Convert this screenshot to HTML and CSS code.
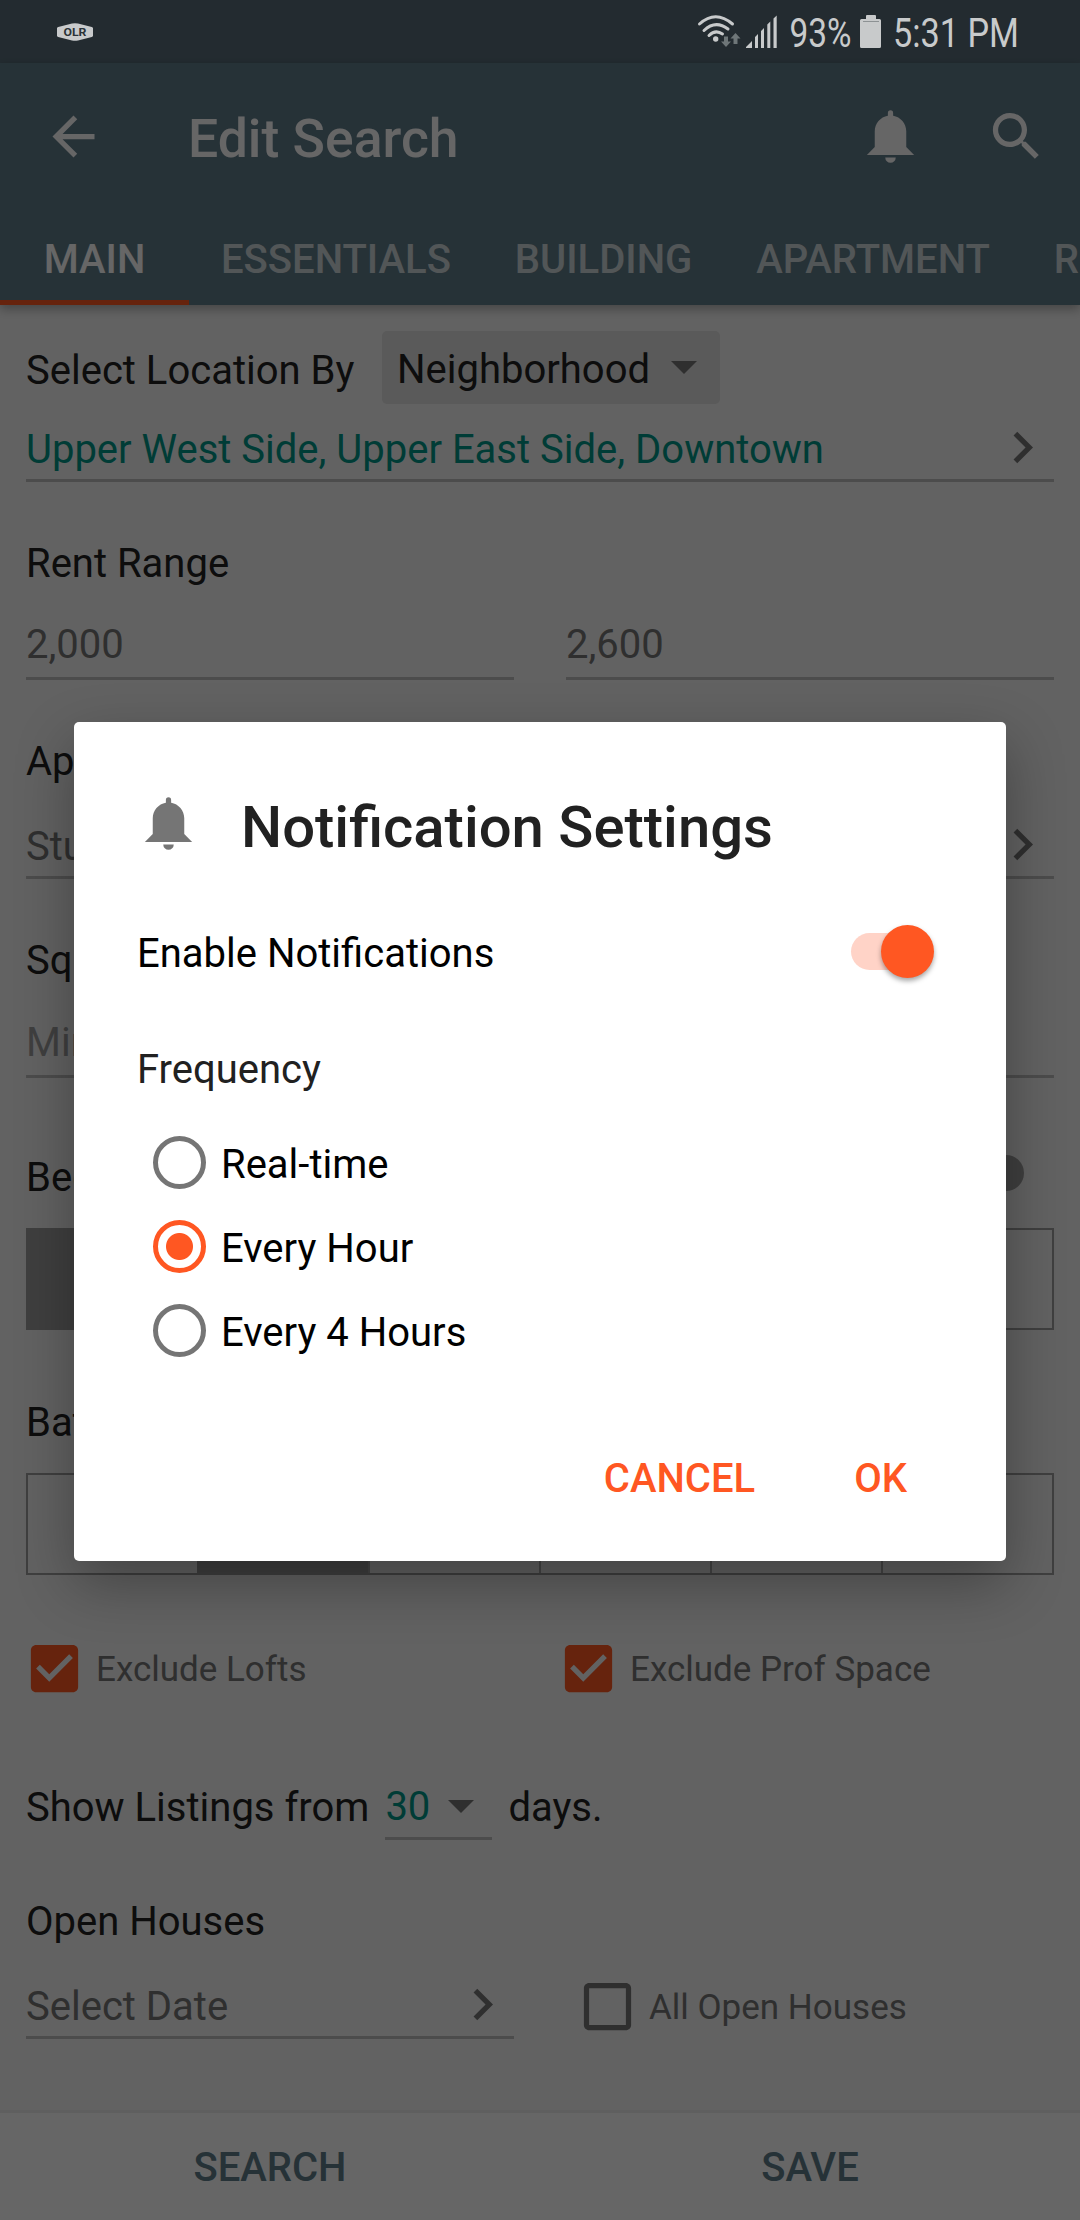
FILE: index.html
```html
<!DOCTYPE html>
<html lang="en">
<head>
    <meta charset="UTF-8">
    <meta name="viewport" content="width=device-width, initial-scale=1.0">
    <title>Edit Search</title>
    <link rel="stylesheet" href="styles.css">
</head>
<body>

<!-- Shared icons -->
<svg class="sprite" width="0" height="0">
    <symbol id="bell" viewBox="0 0 24 24">
        <path d="M14 20A2 2 0 0 1 12 22A2 2 0 0 1 10 20H14M12 2A1 1 0 0 1 13 3V4.08C15.84 4.56 18 7.03 18 10V16L21 19H3L6 16V10C6 7.03 8.16 4.56 11 4.08V3A1 1 0 0 1 12 2Z"/>
    </symbol>
    <symbol id="chevron" viewBox="0 0 24 24">
        <path d="M10 6L8.59 7.41 13.17 12l-4.58 4.59L10 18l6-6z"/>
    </symbol>
    <symbol id="checked" viewBox="0 0 24 24">
        <path d="M19 3H5c-1.11 0-2 .9-2 2v14c0 1.1.89 2 2 2h14c1.11 0 2-.9 2-2V5c0-1.1-.89-2-2-2zm-9 14l-5-5 1.41-1.41L10 14.17l7.59-7.59L19 8l-9 9z"/>
    </symbol>
    <symbol id="unchecked" viewBox="0 0 24 24">
        <path d="M19 5v14H5V5h14m0-2H5c-1.1 0-2 .9-2 2v14c0 1.1.9 2 2 2h14c1.1 0 2-.9 2-2V5c0-1.1-.9-2-2-2z"/>
    </symbol>
</svg>

<div class="app">
    <div class="status-bg"></div>

    <!-- Toolbar -->
    <header class="header">
        <div class="toolbar">
            <svg class="icon" viewBox="0 0 24 24"><path d="M20 11H7.83l5.59-5.59L12 4l-8 8 8 8 1.41-1.41L7.83 13H20v-2z"/></svg>
            <h1>Edit Search</h1>
            <svg class="icon"><use href="#bell"/></svg>
            <svg class="icon" viewBox="0 0 24 24"><path d="M15.5 14h-.79l-.28-.27C15.41 12.59 16 11.11 16 9.5 16 5.91 13.09 3 9.5 3S3 5.91 3 9.5 5.91 16 9.5 16c1.61 0 3.09-.59 4.23-1.57l.27.28v.79l5 4.99L20.49 19l-4.99-5zm-6 0C7.01 14 5 11.99 5 9.5S7.01 5 9.5 5 14 7.01 14 9.5 11.99 14 9.5 14z"/></svg>
        </div>
        <nav class="tabs">
            <span class="tab active">MAIN</span>
            <span class="tab">ESSENTIALS</span>
            <span class="tab">BUILDING</span>
            <span class="tab">APARTMENT</span>
            <span class="tab">R</span>
        </nav>
    </header>

    <!-- Search form -->
    <main class="form">
        <div class="location">
            <span class="location-label">Select Location By</span>
            <div class="dropdown"><span>Neighborhood</span><i class="caret"></i></div>
        </div>
        <div class="field picker teal first"><span>Upper West Side, Upper East Side, Downtown</span><svg class="icon"><use href="#chevron"/></svg></div>

        <div class="label">Rent Range</div>
        <div class="pair rent">
            <div class="field">2,000</div>
            <div class="field">2,600</div>
        </div>

        <div class="label">Apartment Size</div>
        <div class="field picker"><span>Studio</span><svg class="icon"><use href="#chevron"/></svg></div>

        <div class="label">Square Feet</div>
        <div class="pair">
            <div class="field hint">Min</div>
            <div class="field hint">Max</div>
        </div>

        <div class="label beds"><span>Beds</span><i class="toggle-off"></i></div>
        <div class="segments"><i class="on"></i><i></i><i></i><i></i><i></i><i></i></div>

        <div class="label baths">Baths</div>
        <div class="segments"><i></i><i class="on"></i><i></i><i></i><i></i><i></i></div>

        <div class="checks">
            <div class="check"><svg class="icon orange"><use href="#checked"/></svg><span>Exclude Lofts</span></div>
            <div class="check"><svg class="icon orange"><use href="#checked"/></svg><span>Exclude Prof Space</span></div>
        </div>

        <div class="listings">
            <span>Show Listings from</span>
            <div class="days"><span>30</span><i class="caret"></i></div>
            <span>days.</span>
        </div>

        <div class="label">Open Houses</div>
        <div class="pair">
            <div class="field picker"><span>Select Date</span><svg class="icon"><use href="#chevron"/></svg></div>
            <div class="check all-open"><svg class="icon"><use href="#unchecked"/></svg><span>All Open Houses</span></div>
        </div>
    </main>

    <footer class="footer">
        <span>SEARCH</span>
        <span>SAVE</span>
    </footer>
</div>

<!-- Dialog -->
<div class="scrim">
    <div class="dialog">
        <div class="dialog-title">
            <svg class="icon"><use href="#bell"/></svg>
            <h2>Notification Settings</h2>
        </div>
        <div class="enable">
            <span>Enable Notifications</span>
            <div class="switch"><i class="thumb"></i></div>
        </div>
        <div class="frequency">Frequency</div>
        <div class="radio"><i class="ring"></i><span>Real-time</span></div>
        <div class="radio selected"><i class="ring"></i><span>Every Hour</span></div>
        <div class="radio"><i class="ring"></i><span>Every 4 Hours</span></div>
        <div class="actions"><span>CANCEL</span><span>OK</span></div>
    </div>
</div>

<!-- System status bar, stays bright above the scrim -->
<div class="status">
    <svg width="36" height="18" viewBox="0 0 36 18">
        <path d="M0 5.2Q0 4.2 1.2 4L15 .6Q18 0 21 .6L34.8 4Q36 4.2 36 5.2V12.8Q36 13.8 34.8 14L21 17.4Q18 18 15 17.4L1.2 14Q0 13.8 0 12.8Z"/>
        <text class="logo-text" x="6.5" y="12.5" textLength="23" lengthAdjust="spacingAndGlyphs">OLR</text>
    </svg>
    <svg width="380" height="63" viewBox="690 0 380 63">
        <g class="wifi">
            <path d="M699.5 24Q715.5 9.500 732.5 24"/>
            <path d="M704 30.5Q715.5 19.5 728 29"/>
            <path d="M709 35.5Q715.5 29 722.5 34"/>
        </g>
        <circle cx="715.7" cy="39" r="2.7"/>
        <path class="arrows" d="M724 36.5h4v5h3l-5 5.500-5-5.500h3zM733.5 44h4v-5.500h3l-5-5.500-5 5.500h3z"/>
        <path d="M746 48v-1l6-6v7zM755 48V37l3-3v14zM761 48V31l3-3v20zM767.3 48V24.5l3-3V48zM773.5 48V18.5l3.200-3V48z"/>
        <text x="789.5" y="47" textLength="62" lengthAdjust="spacingAndGlyphs">93%</text>
        <path d="M867 15h8q1 0 1 1v3h3.500q1.500 0 1.500 1.500v26q0 1.500-1.500 1.500h-18q-1.500 0-1.500-1.500v-26q0-1.500 1.500-1.500H866v-3q0-1 1-1z"/>
        <path class="battery-line" d="M863 21.5h16"/>
        <text x="893" y="47" textLength="126" lengthAdjust="spacingAndGlyphs">5:31 PM</text>
    </svg>
</div>

</body>
</html>
```
FILE: styles.css
```css
* {
    box-sizing: border-box;
}
body {
    margin: 0;
    width: 1080px;
    height: 2220px;
    overflow: hidden;
    position: relative;
    font-family: Roboto, sans-serif;
    font-size: 40px;
    color: #212121;
}
h1, h2 {
    margin: 0;
    font-weight: 500;
}
.sprite {
    position: absolute;
}
.icon {
    width: 63px;
    height: 63px;
    flex: none;
    fill: #757575;
}
.icon.orange {
    fill: #ff5722;
}
.app {
    display: flex;
    flex-direction: column;
    height: 2220px;
    background-color: #f5f5f5;
}

/* Header */
.status-bg {
    height: 63px;
    flex: none;
    background-color: #586d79;
}
.header {
    height: 242px;
    flex: none;
    background-color: #607d8b;
    box-shadow: 0 4px 10px rgba(0, 0, 0, 0.3);
}
.toolbar {
    display: flex;
    align-items: center;
    height: 147px;
    padding: 0 32px 0 42px;
}
.toolbar .icon {
    fill: #fff;
}
.toolbar .icon:last-child {
    margin-left: 63px;
}
.toolbar h1 {
    flex: 1;
    margin-left: 83px;
    padding-top: 4px;
    font-size: 53.5px;
    color: #fff;
}
.tabs {
    display: flex;
    height: 95px;
    overflow: hidden;
}
.tab {
    flex: none;
    min-width: 189px;
    padding: 0 32px;
    line-height: 99px;
    text-align: center;
    font-weight: 500;
    color: rgba(255, 255, 255, 0.7);
}
.tab.active {
    color: #fff;
    border-bottom: 5px solid #ff5722;
}
.tab:last-child {
    min-width: 0;
    padding-right: 0;
}

/* Form */
.form {
    padding: 26px 26px 0;
}
.location {
    display: flex;
    align-items: center;
    height: 73px;
}
.location-label {
    width: 356px;
    padding-top: 5px;
}
.dropdown {
    display: flex;
    align-items: center;
    justify-content: space-between;
    width: 338px;
    height: 73px;
    padding: 0 23px 0 15px;
    border-radius: 5px;
    background-color: #e0e0e0;
}
.dropdown span {
    padding-top: 3px;
}
.caret {
    border: 13px solid transparent;
    border-top-color: #757575;
    border-bottom: 0;
}
.label {
    height: 50px;
    margin-top: 57px;
    line-height: 50px;
}
.field {
    display: flex;
    align-items: center;
    height: 66px;
    margin-top: 26px;
    padding-bottom: 2px;
    border-bottom: 3px solid #bdbdbd;
    color: #757575;
}
.field.picker {
    justify-content: space-between;
    padding-bottom: 0;
}
.picker span {
    padding-top: 3px;
}
.field.teal {
    color: #009688;
}
.field.first {
    margin-top: 12px;
}
.field.hint {
    color: #9e9e9e;
}
.pair {
    display: grid;
    grid-template-columns: 1fr 1fr;
    column-gap: 52px;
}
.rent .field {
    margin-top: 25px;
}
.beds {
    display: flex;
    justify-content: space-between;
    margin-top: 75px;
    padding-right: 30px;
}
.toggle-off {
    width: 84px;
    height: 36px;
    margin-top: 2px;
    border-radius: 18px;
    background-color: #9e9e9e;
}
.baths {
    margin-top: 68px;
}
.segments {
    display: flex;
    height: 102px;
    margin-top: 25px;
    border: 2px solid #9e9e9e;
}
.segments i {
    flex: 1;
    border-left: 2px solid #b0b0b0;
}
.segments i:first-child {
    border-left: 0;
}
.segments .on {
    background-color: #9e9e9e;
    border-color: #9e9e9e;
}
.checks {
    display: grid;
    grid-template-columns: 534px 1fr;
    margin-top: 62px;
    margin-left: -3px;
}
.check {
    display: flex;
    align-items: center;
    gap: 10px;
    height: 63px;
    font-size: 35px;
    color: #757575;
}
.check span {
    padding-top: 2px;
}
.all-open {
    margin: 28px 0 0 10px;
}
.listings {
    display: flex;
    align-items: center;
    height: 64px;
    margin-top: 76px;
}
.listings > span {
    padding-bottom: 2px;
}
.days {
    display: flex;
    align-items: center;
    justify-content: space-between;
    width: 107px;
    height: 64px;
    margin: 0 16px;
    padding-right: 18px;
    border-bottom: 3px solid #bdbdbd;
    color: #009688;
}
.footer {
    display: flex;
    height: 110px;
    margin-top: auto;
    border-top: 3px solid #eee;
    background-color: #fff;
}
.footer span {
    flex: 1;
    text-align: center;
    line-height: 109px;
    font-weight: 500;
    color: #607d8b;
}

/* Dialog */
.scrim {
    position: absolute;
    inset: 0;
    display: flex;
    align-items: center;
    justify-content: center;
    padding-top: 63px;
    background-color: rgba(0, 0, 0, 0.6);
}
.dialog {
    width: 932px;
    height: 839px;
    padding: 70px 72px 0 63px;
    border-radius: 5px;
    background-color: #fff;
    box-shadow: 0 22px 58px rgba(0, 0, 0, 0.32);
    color: #000;
}
.dialog-title {
    display: flex;
    align-items: center;
    gap: 41px;
    height: 63px;
}
.dialog-title h2 {
    padding-top: 6px;
    font-size: 58px;
    color: #212121;
}
.enable {
    display: flex;
    align-items: center;
    justify-content: space-between;
    height: 53px;
    margin-top: 70px;
}
.enable span {
    padding-top: 3px;
}
.switch {
    display: flex;
    align-items: center;
    justify-content: flex-end;
    width: 83px;
    height: 37px;
    border-radius: 19px;
    background: linear-gradient(to right, #ffd3c7 60px, transparent 60px);
}
.thumb {
    width: 53px;
    height: 53px;
    flex: none;
    border-radius: 50%;
    background-color: #ff5722;
    box-shadow: 0 3px 5px rgba(0, 0, 0, 0.35);
}
.frequency {
    margin: 67px 0 25px;
    line-height: 50px;
    color: #212121;
}
.radio {
    display: flex;
    align-items: center;
    gap: 15px;
    height: 84px;
    padding-left: 16px;
}
.radio span {
    padding-top: 4px;
}
.ring {
    width: 53px;
    height: 53px;
    border: 5px solid #757575;
    border-radius: 50%;
}
.selected .ring {
    border-color: #ff5722;
    background: radial-gradient(circle, #ff5722 13px, #fff 14px);
}
.actions {
    display: flex;
    justify-content: flex-end;
    gap: 99px;
    margin-top: 82px;
    padding-right: 27px;
    line-height: 50px;
    font-weight: 500;
    color: #ff5722;
}

/* Status bar */
.status {
    position: absolute;
    top: 0;
    left: 0;
    display: flex;
    align-items: center;
    justify-content: space-between;
    width: 1080px;
    height: 63px;
    padding: 0 10px 0 57px;
    fill: #c8cacb;
    font-size: 40px;
}
.logo-text {
    font-size: 10px;
    font-weight: 700;
    fill: #2a3238;
}
.wifi {
    fill: none;
    stroke: #c8cacb;
    stroke-width: 3px;
    stroke-linecap: round;
}
.arrows {
    fill: #6e7678;
}
.battery-line {
    stroke: #8d9294;
    stroke-width: 1px;
}
```
